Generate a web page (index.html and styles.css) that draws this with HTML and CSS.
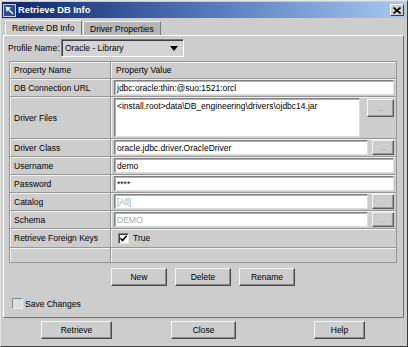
FILE: index.html
```html
<!DOCTYPE html>
<html lang="en">
<head>
    <meta charset="UTF-8">
    <title>Retrieve DB Info</title>
    <link rel="stylesheet" href="styles.css">
</head>
<body>
    <div class="window">
        <div class="titlebar">
            <svg class="app-icon" width="13" height="13" viewBox="0 0 13 13">
                <rect x="0.5" y="0.5" width="12" height="12" fill="#2b4c8c" stroke="#c9d2e4"/>
                <polygon points="2.5,2.5 8,3.5 6.3,5.2 10.5,9.4 9.4,10.5 5.2,6.3 3.5,8" fill="#e8eef8"/>
            </svg>
            <span class="title">Retrieve DB Info</span>
            <span class="close-btn">
                <svg width="8" height="7" viewBox="0 0 8 7">
                    <path d="M0.5 0.5 L7.5 6.5 M7.5 0.5 L0.5 6.5" stroke="#000" stroke-width="1.6"/>
                </svg>
            </span>
        </div>

        <div class="tabs">
            <div class="tab active">Retrieve DB Info</div>
            <div class="tab">Driver Properties</div>
        </div>

        <div class="panel">
            <!-- Profile selector -->
            <div class="profile">
                <span class="profile-label">Profile Name:</span>
                <div class="combo">
                    <span>Oracle - Library</span>
                    <span class="arrow"></span>
                </div>
            </div>

            <!-- Property grid -->
            <table class="props">
                <colgroup>
                    <col class="col-name">
                    <col>
                </colgroup>
                <tr class="row-head">
                    <th>Property Name</th>
                    <th>Property Value</th>
                </tr>
                <tr>
                    <td class="name">DB Connection URL</td>
                    <td class="value"><div class="field">jdbc:oracle:thin:@suo:1521:orcl</div></td>
                </tr>
                <tr class="row-files">
                    <td class="name">Driver Files</td>
                    <td class="value">
                        <div class="with-btn">
                            <div class="field area">&lt;install.root&gt;data\DB_engineering\drivers\ojdbc14.jar</div>
                            <button class="dots big">...</button>
                        </div>
                    </td>
                </tr>
                <tr>
                    <td class="name">Driver Class</td>
                    <td class="value">
                        <div class="with-btn">
                            <div class="field">oracle.jdbc.driver.OracleDriver</div>
                            <button class="dots">...</button>
                        </div>
                    </td>
                </tr>
                <tr>
                    <td class="name">Username</td>
                    <td class="value"><div class="field">demo</div></td>
                </tr>
                <tr>
                    <td class="name">Password</td>
                    <td class="value"><div class="field">****</div></td>
                </tr>
                <tr>
                    <td class="name">Catalog</td>
                    <td class="value">
                        <div class="with-btn">
                            <div class="field disabled">[All]</div>
                            <button class="dots disabled">...</button>
                        </div>
                    </td>
                </tr>
                <tr>
                    <td class="name">Schema</td>
                    <td class="value">
                        <div class="with-btn">
                            <div class="field disabled">DEMO</div>
                            <button class="dots disabled">...</button>
                        </div>
                    </td>
                </tr>
                <tr class="row-check">
                    <td class="name">Retrieve Foreign Keys</td>
                    <td class="value">
                        <div class="checkline">
                            <span class="checkbox">
                                <svg width="9" height="9" viewBox="0 0 9 9">
                                    <path d="M1.5 4.2 L3.6 6.6 L7.6 1.8" stroke="#000" stroke-width="1.6" fill="none"/>
                                </svg>
                            </span>
                            True
                        </div>
                    </td>
                </tr>
                <tr class="row-empty">
                    <td class="name"></td>
                    <td class="value"></td>
                </tr>
            </table>

            <div class="actions">
                <button class="btn">New</button>
                <button class="btn">Delete</button>
                <button class="btn">Rename</button>
            </div>

            <div class="save">
                <span class="checkbox plain"></span>
                Save Changes
            </div>
        </div>

        <div class="footer">
            <button class="btn btn-retrieve">Retrieve</button>
            <button class="btn btn-close">Close</button>
            <button class="btn btn-help">Help</button>
        </div>
    </div>
</body>
</html>
```

FILE: styles.css
```css
* {
    box-sizing: border-box;
}

body {
    margin: 0;
    font-family: "Liberation Sans", Arial, sans-serif;
    font-size: 8.5px;
    color: #000;
    background: #cdcdcd;
}

.window {
    width: 408px;
    height: 347px;
    background: #cdcdcd;
    border: 1px solid;
    border-color: #e4e4e4 #3a3a3a #3a3a3a #e4e4e4;
    padding: 1px;
    display: flex;
    flex-direction: column;
}

/* Title bar */
.titlebar {
    height: 16px;
    flex-shrink: 0;
    display: flex;
    align-items: center;
    padding: 0 2px 0 1px;
    background: linear-gradient(to right, #0a246a 0%, #5a7fbf 55%, #a6caf0 100%);
    color: #fff;
    font-weight: bold;
    font-size: 9.3px;
}

.app-icon {
    margin-right: 2px;
}

.title {
    flex: 1;
}

.close-btn {
    width: 14px;
    height: 12px;
    display: flex;
    align-items: center;
    justify-content: center;
    background: #cdcdcd;
    border: 1px solid;
    border-color: #fff #404040 #404040 #fff;
}

/* Tabs */
.tabs {
    display: flex;
    align-items: flex-end;
    gap: 1px;
    height: 17px;
    padding-left: 3px;
    flex-shrink: 0;
}

.tab {
    height: 14px;
    padding: 0 6px;
    display: flex;
    align-items: center;
    border: 1px solid;
    border-bottom: none;
    border-color: #f4f4f4 #7a7a7a #7a7a7a #f4f4f4;
    background: #b6b6b6;
}

.tab.active {
    width: 77px;
    height: 15px;
    background: #cdcdcd;
}

/* Main panel */
.panel {
    height: 283px;
    flex-shrink: 0;
    margin: 0 2px 0 1px;
    padding-top: 3px;
    border: 1px solid;
    border-color: #fff #707070 #707070 #fff;
}

.profile {
    display: flex;
    align-items: center;
    height: 18px;
    padding-left: 4px;
}

.profile-label {
    width: 53px;
}

.combo {
    width: 123px;
    height: 18px;
    display: flex;
    align-items: center;
    justify-content: space-between;
    padding: 0 5px 0 3px;
    background: #d4d4d4;
    border: 1px solid;
    border-color: #7a7a7a #fff #fff #7a7a7a;
    box-shadow: inset 1px 1px 0 #404040;
}

.arrow {
    width: 0;
    height: 0;
    border-left: 4px solid transparent;
    border-right: 4px solid transparent;
    border-top: 5px solid #000;
}

/* Property grid */
.props {
    width: 388px;
    margin: 4px 0 0 5px;
    table-layout: fixed;
    border-collapse: separate;
    border-spacing: 0;
    border-top: 1px solid #969696;
    border-left: 1px solid #969696;
}

.col-name {
    width: 101px;
}

.props th,
.props td {
    height: 18px;
    padding: 0;
    border-right: 1px solid #969696;
    border-bottom: 1px solid #969696;
    box-shadow: inset 1px 1px 0 #f2f2f2;
    font-weight: normal;
    text-align: left;
    vertical-align: middle;
}

.props th,
.props td.name {
    padding-left: 4px;
    white-space: nowrap;
}

.props th:last-child {
    padding-left: 5px;
}

.props .row-head th {
    height: 17px;
}

.props td.value {
    padding: 1px 2px 1px 3px;
}

.props .row-files td {
    height: 42px;
}

.props .row-files td.value {
    vertical-align: top;
    padding-top: 1px;
}

.props .row-check td {
    height: 19px;
}

.props .row-empty td {
    height: 15px;
}

.with-btn {
    display: flex;
    align-items: flex-start;
    gap: 4px;
}

.field {
    flex: 1;
    height: 15px;
    padding: 0 2px;
    display: flex;
    align-items: center;
    background: #fff;
    border: 1px solid;
    border-color: #808080 #dcdcdc #dcdcdc #808080;
    box-shadow: inset 1px 1px 0 #b0b0b0;
    white-space: nowrap;
    overflow: hidden;
}

.field.area {
    height: 39px;
    align-items: flex-start;
    padding-top: 2px;
    margin-right: 3px;
}

.field.disabled {
    color: #a6a6a6;
}

button {
    font: inherit;
    color: inherit;
    padding: 0;
    cursor: default;
}

.dots {
    width: 22px;
    height: 15px;
    background: #cdcdcd;
    border: 1px solid;
    border-color: #f4f4f4 #5a5a5a #5a5a5a #f4f4f4;
    box-shadow: inset -1px -1px 0 #9a9a9a;
    color: #8a8a8a;
    font-size: 7px;
    line-height: 11px;
}

.dots.big {
    width: 27px;
    height: 18px;
    margin-top: 1px;
}

.dots.disabled {
    color: #a8a8a8;
}

.checkline {
    display: flex;
    align-items: center;
    gap: 4px;
    padding-left: 4px;
}

.checkbox {
    width: 11px;
    height: 11px;
    display: inline-flex;
    align-items: center;
    justify-content: center;
    background: #fff;
    border: 1px solid;
    border-color: #808080 #e8e8e8 #e8e8e8 #808080;
    box-shadow: inset 1px 1px 0 #404040;
}

.checkbox.plain {
    background: #dedede;
    border-color: #8a8a8a #f0f0f0 #f0f0f0 #8a8a8a;
    box-shadow: none;
}

/* Buttons */
.btn {
    height: 18px;
    background: #cdcdcd;
    border: 1px solid;
    border-color: #f4f4f4 #4a4a4a #4a4a4a #f4f4f4;
    box-shadow: inset -1px -1px 0 #8a8a8a;
}

.actions {
    display: flex;
    gap: 8px;
    margin-top: 5px;
    padding-left: 107px;
}

.actions .btn {
    width: 56px;
}

.save {
    display: flex;
    align-items: center;
    gap: 2px;
    margin: 12px 0 0 8px;
}

.footer {
    display: flex;
    margin-top: 3px;
}

.btn-retrieve {
    width: 71px;
    margin-left: 39px;
}

.btn-close {
    width: 65px;
    margin-left: 59px;
}

.btn-help {
    width: 51px;
    margin-left: 78px;
}
```
